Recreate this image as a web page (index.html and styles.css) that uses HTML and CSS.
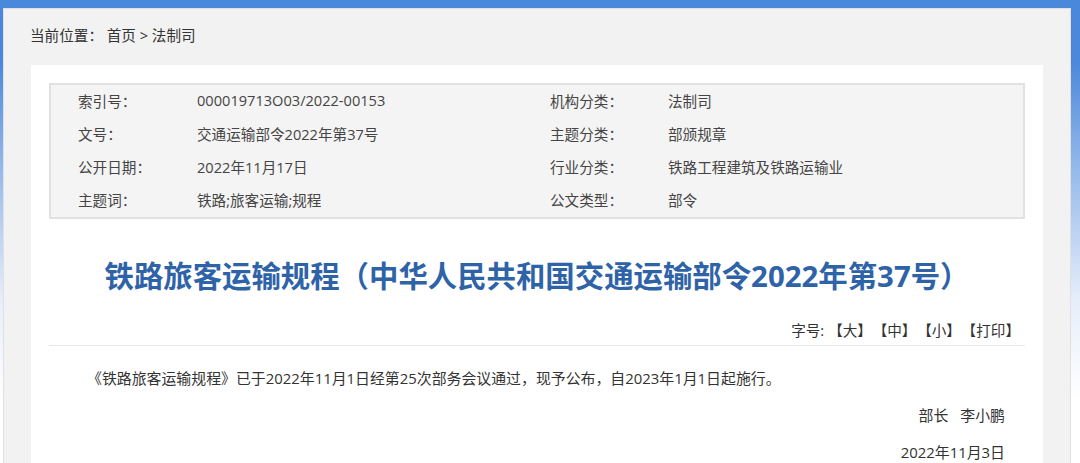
FILE: index.html
```html
<!DOCTYPE html>
<html lang="zh-CN">
<head>
  <meta charset="UTF-8" />
  <meta name="viewport" content="width=device-width, initial-scale=1.0" />
  <title>铁路旅客运输规程</title>
  <link rel="stylesheet" href="styles.css">
</head>
<body>
  <div class="frame">
    <div class="page">
      <div class="crumb">当前位置： 首页 &gt; 法制司</div>

      <main class="panel">
        <section class="info">
          <div class="label">索引号：</div>
          <div class="value">000019713O03/2022-00153</div>
          <div class="label">机构分类：</div>
          <div class="value">法制司</div>

          <div class="label">文号：</div>
          <div class="value">交通运输部令2022年第37号</div>
          <div class="label">主题分类：</div>
          <div class="value">部颁规章</div>

          <div class="label">公开日期：</div>
          <div class="value">2022年11月17日</div>
          <div class="label">行业分类：</div>
          <div class="value">铁路工程建筑及铁路运输业</div>

          <div class="label">主题词：</div>
          <div class="value">铁路;旅客运输;规程</div>
          <div class="label">公文类型：</div>
          <div class="value">部令</div>
        </section>

        <h1 class="title">铁路旅客运输规程（中华人民共和国交通运输部令2022年第37号）</h1>

        <div class="fontsize">字号:<span>【大】</span><span>【中】</span><span>【小】</span><span>【打印】</span></div>

        <article class="content">
          <p>《铁路旅客运输规程》已于2022年11月1日经第25次部务会议通过，现予公布，自2023年1月1日起施行。</p>
          <p class="sign">部长<span class="gap"></span>李小鹏</p>
          <p class="sign date">2022年11月3日</p>
        </article>
      </main>
    </div>
  </div>
</body>
</html>
```

FILE: styles.css
```css
* {
  box-sizing: border-box;
  margin: 0;
  padding: 0;
}

html, body {
  height: 100%;
}

body {
  font-family: "Open Sans", "Noto Sans CJK SC", sans-serif;
  font-size: 14px;
  color: #333;
  background: #fff;
  overflow: hidden;
}

.frame {
  min-height: 100%;
  padding: 8px 9px 0 3px;
  background: linear-gradient(to bottom, #4a88db 0, #4a88db 60px, #8fb5ea 160px, #e6eefa 300px, #fff 400px);
}

.page {
  min-height: 455px;
  background: #f2f2f2;
  border: 1px solid #e0e0e0;
  border-bottom: none;
}

.crumb {
  padding: 16px 0 0 26px;
  height: 56px;
  font-size: 14.6px;
  line-height: 20px;
  color: #333;
}

.panel {
  width: 1012px;
  margin-left: 27px;
  min-height: 400px;
  background: #fff;
  padding: 18px 18px 0;
}

.info {
  display: grid;
  grid-template-columns: 119px 353px 118px 1fr;
  grid-auto-rows: 33px;
  align-items: center;
  padding-left: 27px;
  background: #f4f4f4;
  border: 2px solid #e1e1e1;
  font-size: 14.6px;
  color: #444;
}

.info div {
  padding-bottom: 3px;
}

.title {
  margin-top: 37px;
  text-align: center;
  font-size: 29.4px;
  line-height: 40px;
  font-weight: bold;
  color: #2f63a8;
}

.fontsize {
  margin-top: 24px;
  padding-right: 5px;
  text-align: right;
  font-size: 14.6px;
  line-height: 20px;
  color: #333;
}

.fontsize span {
  margin-left: 8px;
}

.fontsize span:first-child {
  margin-left: 4px;
}

.content {
  border-top: 1px solid #e8e8e8;
  margin-top: 5px;
  padding: 22px 20px 0 38px;
  font-size: 14.9px;
  line-height: 20px;
}

.sign {
  text-align: right;
  margin-top: 17px;
}

.date {
  margin-top: 17px;
}

.gap {
  display: inline-block;
  width: 12px;
}
```
